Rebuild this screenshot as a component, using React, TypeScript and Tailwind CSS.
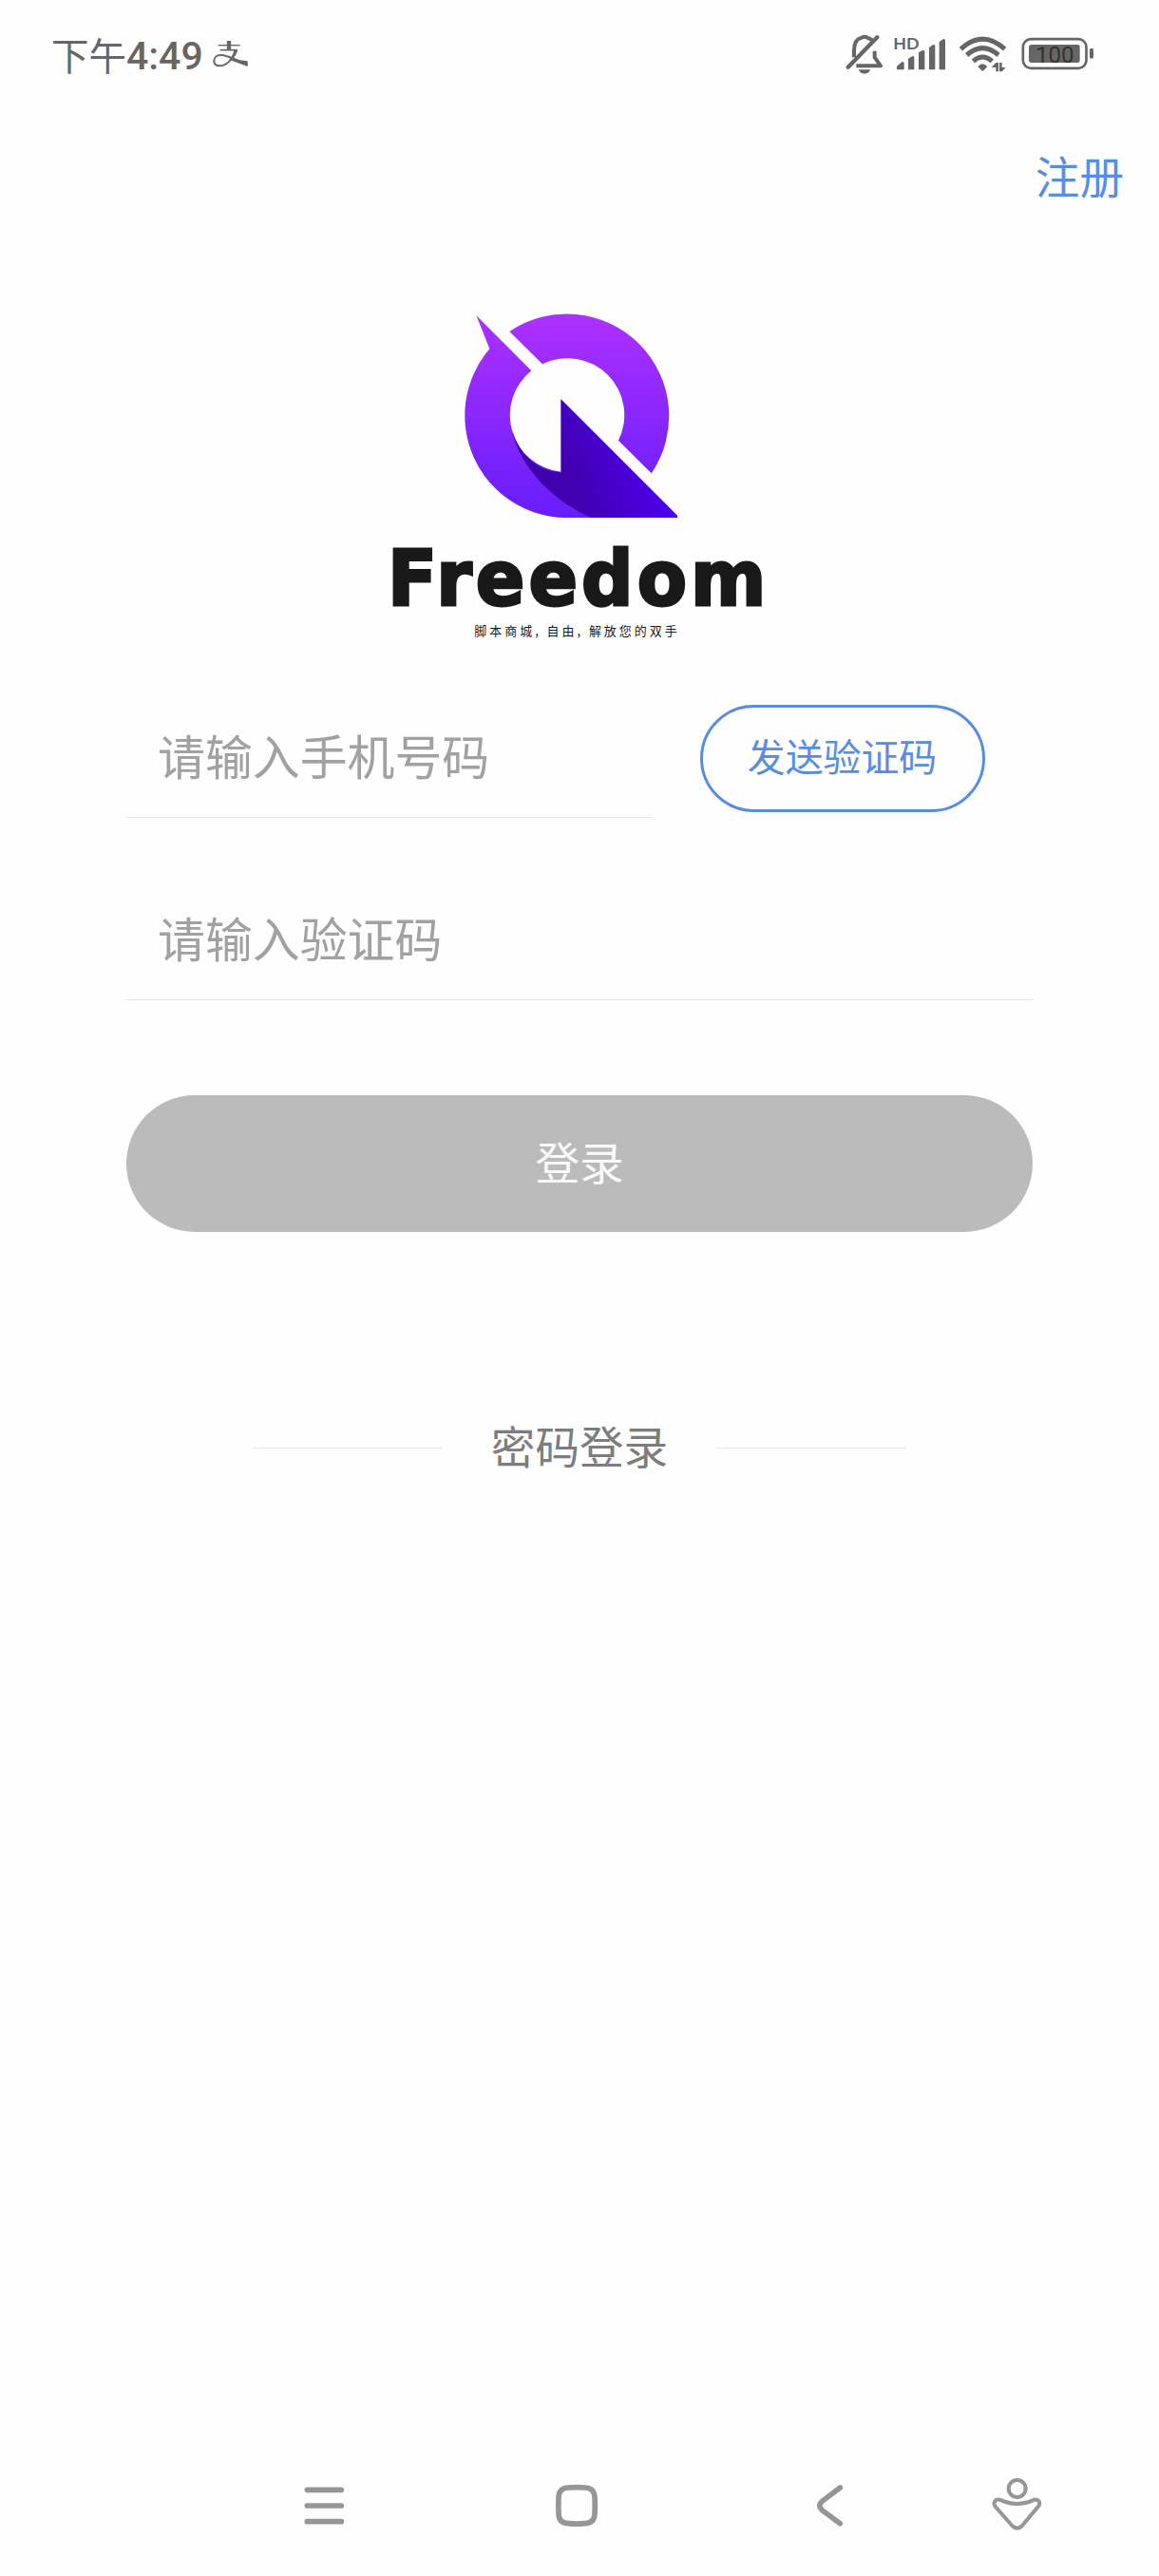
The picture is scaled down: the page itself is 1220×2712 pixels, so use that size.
import React from "react";

const cjk = "font-['Noto_Sans_CJK_SC',sans-serif]";

function StatusBar() {
  return (
    <header className="flex h-[116px] items-start justify-between pt-5 text-[#666]">
      <div className="flex h-20 items-center pl-[54px]">
        <span className="-mt-1.5 text-[39.5px] leading-[76px]">下午</span>
        <span className="-mt-0.5 font-[Roboto,sans-serif] text-[41px] leading-[76px] font-medium">4:49</span>
        <svg className="ml-[9px] h-20 w-10" viewBox="580 0 120 240" fill="none" stroke="currentColor">
          <path d="M600 83H669" strokeWidth="4" />
          <path d="M634 69V97" strokeWidth="13" />
          <path d="M606 98H660" strokeWidth="5" />
          <path d="M656 98C646 127 627 148 605 148C592 148 586 141 587 130C588 118 599 113 612 114C637 116 664 135 693 143" strokeWidth="6" />
          <path d="M650 98H662C658 110 652 120 645 127L693 133V150L636 129C643 119 648 109 650 98Z" fill="currentColor" stroke="none" />
        </svg>
      </div>
      <div className="flex pr-[61px]">
        <svg className="h-20 w-[45px]" viewBox="60 0 135 240" fill="none" stroke="currentColor">
          <path d="M90 121V99C90 74 101 62 114 59Q123 53 132 59Q143 61 149 69" strokeWidth="12" />
          <path d="M71 152L163 58" strokeWidth="13" strokeLinecap="round" />
          <path d="M155 101V121L174 148H97" strokeWidth="12" strokeLinejoin="round" />
          <path d="M104 160H142C137 170 131 173 123 173S109 170 104 160Z" fill="currentColor" stroke="none" />
        </svg>
        <svg className="h-20 w-[70px]" viewBox="195 0 210 240" fill="currentColor">
          <text x="214" y="96" fontSize="52" fontWeight="700" fontFamily="Lato, sans-serif" textLength="82" lengthAdjust="spacingAndGlyphs">HD</text>
          <path d="M225 160V149L243 134L248 139V160ZM261 160V125L275 117Q280 116 280 122V160ZM294 160V106L308 98Q313 98 313 104V160ZM327 160V90L340 81Q346 80 346 86V160ZM359 160V72L372 63Q378 62 378 68V160Z" />
        </svg>
        <svg className="h-20 w-[65px]" viewBox="405 0 195 240" fill="none" stroke="currentColor">
          <path d="M427 95Q496 32 566 95" strokeWidth="15" />
          <path d="M446 114Q496 70 546 114" strokeWidth="15" />
          <path d="M466 133Q496 107 526 133" strokeWidth="15" />
          <path d="M481 151Q496 133 511 151L496 165Z" fill="currentColor" stroke="none" />
          <path d="M546 138V166H538V153H524L538 138ZM549 138H557V153H569L557 166H549Z" fill="currentColor" stroke="none" />
        </svg>
        <svg className="h-20 w-[90px]" viewBox="600 0 270 240" fill="currentColor">
          <rect x="623.5" y="63.5" width="200" height="92" rx="25" fill="none" stroke="currentColor" strokeWidth="8" />
          <rect x="642" y="81" width="161" height="57" rx="8" />
          <rect x="834" y="92" width="12" height="33" rx="6" />
          <text x="663" y="139" fill="#333" fontSize="71" fontFamily="Roboto, sans-serif" textLength="122" lengthAdjust="spacingAndGlyphs">100</text>
        </svg>
      </div>
    </header>
  );
}

function Logo() {
  return (
    <div className="flex flex-col items-center">
      <svg className="mr-[20px] h-[250px] w-[260px]" viewBox="0 0 780 750">
        <defs>
          <linearGradient id="ring" gradientUnits="userSpaceOnUse" x1="0" y1="60" x2="0" y2="705">
            <stop offset="0" stopColor="#ad31ff" />
            <stop offset="1" stopColor="#661dfa" />
          </linearGradient>
          <linearGradient id="wedge" gradientUnits="userSpaceOnUse" x1="370" y1="560" x2="640" y2="450">
            <stop offset="0" stopColor="#4000ad" />
            <stop offset="1" stopColor="#4e00ee" />
          </linearGradient>
        </defs>
        <path fill="url(#ring)" d="M199 117A322.500 322.500 0 0 1 647 565L543 461A179.500 179.500 0 0 0 303 220Z" />
        <path fill="url(#ring)" d="M94 66L268 241A179.500 179.500 0 0 0 361 560L480 705H375A322.500 322.500 0 0 1 136 172Z" />
        <path fill="url(#wedge)" d="M361 330L729 698V705H458C350 660 225 550 205 417C222 500 285 560 361 561Z" />
      </svg>
      <svg className="h-[104px] w-[420px]" viewBox="0 0 420 104">
        <text transform="translate(8 76.5) scale(0.94 1)" fill="#191919" stroke="#191919" strokeWidth="3" fontSize="81" fontWeight="700" fontFamily="DejaVu Sans, sans-serif" letterSpacing="4.300">Freedom</text>
      </svg>
      <p className="-mt-[12px] mr-[5px] h-6 text-[13px] leading-6 tracking-[2.950px] whitespace-nowrap text-[#191919]">脚本商城, 自由, 解放您的双手</p>
    </div>
  );
}

function LoginForm() {
  return (
    <section className="flex flex-col px-[133px]">
      <div className="flex h-[119px]">
        <div className="flex h-[119px] w-[554px] items-center border-b border-[#e8e8e8] pl-[33px] text-[49.900px] leading-[70px] text-[#a1a1a1]">
          <span className="-mt-[14px]">请输入手机号码</span>
        </div>
        <button className="ml-[50px] h-[113px] w-[300px] rounded-full border-3 border-[#588ee2] pr-[1px] pb-[7px] text-[39.900px] leading-[60px] text-[#588ee2]">
          发送验证码
        </button>
      </div>
      <div className="mt-[73px] flex h-[119px] items-center border-b border-[#e8e8e8] pl-[33px] text-[49.900px] leading-[70px] text-[#a1a1a1]">
        <span className="-mt-[14px]">请输入验证码</span>
      </div>
      <button className="mt-[100px] h-36 rounded-full bg-[#bbb] pb-[7px] text-[46.600px] leading-[70px] text-[#f8f8f8]">
        登录
      </button>
    </section>
  );
}

function NavBar() {
  return (
    <nav className="flex h-[100px] pl-[290px] text-[#969696]">
      <svg className="h-[100px] w-[250px]" viewBox="0 0 750 300" stroke="currentColor" strokeWidth="17" strokeLinecap="round">
        <path d="M100 94H208M100 144H208M100 194H208" />
      </svg>
      <svg className="h-[100px] w-[280px]" viewBox="750 0 840 300" fill="none" stroke="currentColor" strokeWidth="17">
        <path d="M924 87Q951 85 978 87Q1006 88 1008 116Q1010 144 1008 171Q1006 199 978 200Q951 203 924 200Q896 199 894 171Q893 144 894 116Q896 88 924 87Z" />
      </svg>
      <svg className="h-[100px] w-[170px]" viewBox="0 0 510 300" fill="none" stroke="currentColor" strokeWidth="17" strokeLinecap="round">
        <path d="M193 87L136 130Q121 144 136 158L193 200" />
      </svg>
      <svg className="h-[100px] w-[150px]" viewBox="510 0 450 300" fill="none" stroke="currentColor" strokeWidth="12">
        <circle cx="752" cy="90" r="27" />
        <path d="M697 125Q752 151 807 125C820 123 827 134 820 145L768 207Q752 223 736 207L684 148C674 135 682 122 697 125Z" />
      </svg>
    </nav>
  );
}

export default function App() {
  return (
    <main className={`${cjk} flex h-[2712px] w-[1220px] flex-col bg-[#fefefe]`}>
      <StatusBar />
      <div className="flex h-[144px] justify-end pt-[33px] pr-[37px]">
        <a className="h-[70px] text-[46.600px] leading-[70px] text-[#588ee2]">注册</a>
      </div>
      <div className="mt-[50px] h-[432px]">
        <Logo />
      </div>
      <LoginForm />
      <div className="mt-[192px] flex h-[70px] items-center justify-between px-[266px]">
        <span className="h-px w-[200px] bg-[#e8e8e8]" />
        <span className="-mt-1.5 text-[46.600px] leading-[70px] text-[#7d7d7d]">密码登录</span>
        <span className="h-px w-[200px] bg-[#e8e8e8]" />
      </div>
      <div className="mt-auto pb-[22px]">
        <NavBar />
      </div>
    </main>
  );
}
